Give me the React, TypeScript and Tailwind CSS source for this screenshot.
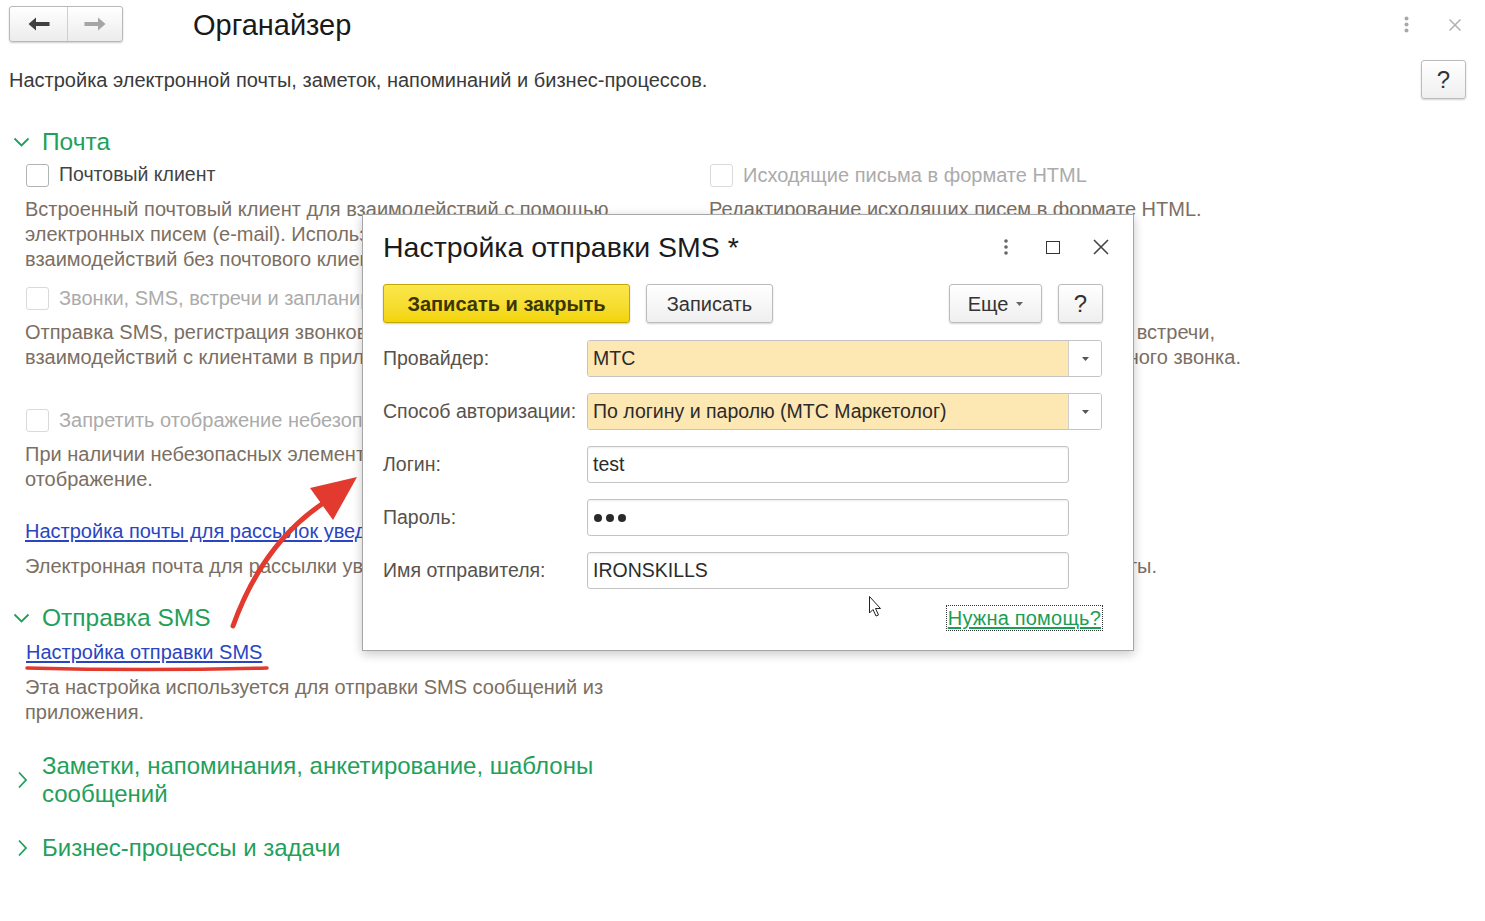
import React from "react";

function Checkbox({ disabled }: { disabled?: boolean }) {
  return (
    <span
      className={`inline-block h-[23px] w-[23px] shrink-0 rounded-[3px] border bg-white ${
        disabled ? "border-[#dadada]" : "border-[#b3b3b3]"
      }`}
    />
  );
}

function ChevronDown() {
  return (
    <svg width="17" height="10" viewBox="0 0 17 10" className="shrink-0">
      <path d="M1.5 1.5 L8.5 8.5 L15.5 1.5" fill="none" stroke="#1fa05b" strokeWidth="1.8" />
    </svg>
  );
}

function ChevronRight() {
  return (
    <svg width="17" height="18" viewBox="0 0 17 18" className="shrink-0">
      <path d="M5 1.5 L12 9 L5 16.5" fill="none" stroke="#1fa05b" strokeWidth="1.8" />
    </svg>
  );
}

function NavArrow({ dir, color }: { dir: "left" | "right"; color: string }) {
  return (
    <svg width="22" height="14" viewBox="0 0 22 14" className={dir === "right" ? "scale-x-[-1]" : ""}>
      <path d="M0.5 7 L8 0.5 V5 H21.5 V9 H8 V13.5 Z" fill={color} />
    </svg>
  );
}

function HelpButton() {
  return (
    <button className="flex h-[39px] w-[45px] items-center justify-center rounded-[3px] border border-[#bcbcbc] bg-gradient-to-b from-white to-[#efefef] text-[24px] text-[#333] shadow-[0_1px_2px_rgba(0,0,0,0.18)]">
      ?
    </button>
  );
}

function Field({
  label,
  value,
  select,
  password,
}: {
  label: string;
  value: string;
  select?: boolean;
  password?: boolean;
}) {
  return (
    <div className="flex h-[37px] items-center">
      <span className="w-[204px] shrink-0 text-[19.5px] text-[#57524c]">{label}</span>
      {select ? (
        <div className="flex h-full w-[515px] overflow-hidden rounded-[3px] border border-[#c4c4c4] shadow-[inset_0_1px_2px_rgba(0,0,0,0.08)]">
          <div className="flex flex-1 items-center bg-[#fde7b2] pl-[5px] text-[19.5px] text-[#2b2b2b]">{value}</div>
          <div className="flex w-[33px] items-center justify-center border-l border-[#d0d0d0] bg-white">
            <svg width="7" height="4" viewBox="0 0 7 4">
              <path d="M0 0 H7 L3.5 4 Z" fill="#555" />
            </svg>
          </div>
        </div>
      ) : (
        <div className="flex h-full w-[482px] items-center rounded-[3px] border border-[#c4c4c4] bg-white pl-[5px] text-[19.5px] text-[#2b2b2b] shadow-[inset_0_1px_2px_rgba(0,0,0,0.08)]">
          {password ? (
            <span className="flex items-center gap-[4px] pl-[1px]">
              <span className="h-[8px] w-[8px] rounded-full bg-[#2a2a2a]" />
              <span className="h-[8px] w-[8px] rounded-full bg-[#2a2a2a]" />
              <span className="h-[8px] w-[8px] rounded-full bg-[#2a2a2a]" />
            </span>
          ) : (
            value
          )}
        </div>
      )}
    </div>
  );
}

function SmsDialog() {
  return (
    <div className="absolute left-[362px] top-[214px] h-[437px] w-[772px] border border-[#a6a6a6] bg-white pl-[20px] pr-[30px] pt-[14px] shadow-[0_3px_10px_rgba(0,0,0,0.22)]">
      <div className="-mr-[6px] flex h-[36px] items-center">
        <h2 className="text-[28.5px] leading-[36px] text-[#1b1b1b]">Настройка отправки SMS *</h2>
        <div className="ml-auto flex items-center">
          <svg width="4" height="16" viewBox="0 0 4 16">
            <circle cx="2" cy="2" r="1.8" fill="#666" />
            <circle cx="2" cy="8" r="1.8" fill="#666" />
            <circle cx="2" cy="14" r="1.8" fill="#666" />
          </svg>
          <span className="ml-[38px] inline-block h-[13px] w-[14px] border-[1.6px] border-[#333]" />
          <svg width="16" height="16" viewBox="0 0 16 16" className="ml-[33px]">
            <path d="M1 1 L15 15 M15 1 L1 15" stroke="#444" strokeWidth="1.6" />
          </svg>
        </div>
      </div>

      <div className="mt-[19px] flex h-[39px] items-stretch">
        <button className="w-[247px] rounded-[3px] border border-[#c2a800] bg-gradient-to-b from-[#fbe74a] to-[#f2d500] text-[20px] font-bold text-[#3d3500] shadow-[0_1px_2px_rgba(0,0,0,0.2)]">
          Записать и закрыть
        </button>
        <button className="ml-[16px] w-[127px] rounded-[3px] border border-[#bcbcbc] bg-gradient-to-b from-white to-[#efefef] text-[20px] text-[#333] shadow-[0_1px_2px_rgba(0,0,0,0.18)]">
          Записать
        </button>
        <button className="ml-auto flex w-[93px] items-center justify-center gap-[8px] rounded-[3px] border border-[#bcbcbc] bg-gradient-to-b from-white to-[#efefef] text-[20px] text-[#333] shadow-[0_1px_2px_rgba(0,0,0,0.18)]">
          Еще
          <svg width="7" height="4" viewBox="0 0 7 4">
            <path d="M0 0 H7 L3.5 4 Z" fill="#666" />
          </svg>
        </button>
        <div className="ml-[16px]">
          <HelpButton />
        </div>
      </div>

      <div className="mt-[17px] flex flex-col gap-[16px]">
        <Field label="Провайдер:" value="МТС" select />
        <Field label="Способ авторизации:" value="По логину и паролю (МТС Маркетолог)" select />
        <Field label="Логин:" value="test" />
        <Field label="Пароль:" value="" password />
        <Field label="Имя отправителя:" value="IRONSKILLS" />
      </div>

      <div className="mt-[16px] flex justify-end">
        <a className="border border-dotted border-[#333] px-[1px] text-[20px] tracking-[0.2px] leading-[24px] text-[#1a9e55] underline decoration-[#1a9e55] underline-offset-[2px]">
          Нужна помощь?
        </a>
      </div>
    </div>
  );
}

export default function App() {
  const desc = "text-[20px] leading-[25px] text-[#7b6f63]";
  const heading = "flex items-center gap-[12px] pl-[13px] text-[24.5px] leading-[30px] text-[#1fa05b]";
  const link = "text-[20px] leading-[25px] text-[#2a45c2] underline underline-offset-[2px]";

  return (
    <div className="relative h-[921px] w-[1485px] overflow-hidden bg-white font-['Liberation_Sans',Arial,sans-serif] text-[#333]">
      {/* header */}
      <header className="flex items-start pl-[9px] pr-[24px] pt-[6px]">
        <div className="flex h-[36px] w-[114px] overflow-hidden rounded-[3px] border border-[#b8b8b8] bg-gradient-to-b from-white to-[#ececec] shadow-[0_1px_2px_rgba(0,0,0,0.2)]">
          <div className="flex w-[58px] items-center justify-center border-r border-[#cfcfcf]">
            <NavArrow dir="left" color="#404040" />
          </div>
          <div className="flex flex-1 items-center justify-center">
            <NavArrow dir="right" color="#a5a5a5" />
          </div>
        </div>
        <h1 className="ml-[70px] text-[29px] leading-[38px] text-[#1a1a1a]">Органайзер</h1>
        <div className="ml-auto flex items-center pt-[10px]">
          <svg width="5" height="17" viewBox="0 0 5 17">
            <circle cx="2.5" cy="2.5" r="2" fill="#a8a8a8" />
            <circle cx="2.5" cy="8.5" r="2" fill="#a8a8a8" />
            <circle cx="2.5" cy="14.5" r="2" fill="#a8a8a8" />
          </svg>
          <svg width="12" height="12" viewBox="0 0 12 12" className="ml-[40px]">
            <path d="M0.5 0.5 L11.5 11.5 M11.5 0.5 L0.5 11.5" stroke="#b0b0b0" strokeWidth="1.5" />
          </svg>
        </div>
      </header>

      <div className="mt-[16px] flex items-center justify-between pl-[9px] pr-[19px]">
        <p className="text-[20px] text-[#3a3a3a]">
          Настройка электронной почты, заметок, напоминаний и бизнес-процессов.
        </p>
        <HelpButton />
      </div>

      {/* Почта */}
      <div className={`mt-[28px] ${heading}`}>
        <ChevronDown />
        <span>Почта</span>
      </div>

      <div className="grid grid-cols-[684px_1fr] pl-[25px]">
        {/* row 1 */}
        <div className="mt-[6px]">
          <label className="flex h-[24px] items-center gap-[10px] pl-[1px] text-[19.5px] text-[#444]">
            <Checkbox />
            Почтовый клиент
          </label>
          <p className={`mt-[10px] whitespace-nowrap ${desc}`}>
            Встроенный почтовый клиент для взаимодействий с помощью
            <br />
            электронных писем (e-mail). Использование
            <br />
            взаимодействий без почтового клиента.
          </p>
        </div>
        <div className="mt-[6px]">
          <label className="flex h-[24px] items-center gap-[10px] pl-[1px] text-[20px] text-[#ababab]">
            <Checkbox disabled />
            Исходящие письма в формате HTML
          </label>
          <p className={`mt-[10px] ${desc}`}>Редактирование исходящих писем в формате HTML.</p>
        </div>

        {/* row 2 */}
        <div className="mt-[14px]">
          <label className="flex h-[24px] items-center gap-[10px] pl-[1px] text-[20px] text-[#ababab]">
            <Checkbox disabled />
            Звонки, SMS, встречи и запланированные взаимодействия
          </label>
          <p className={`mt-[10px] whitespace-nowrap ${desc}`}>
            Отправка SMS, регистрация звонков и встреч,
            <br />
            взаимодействий с клиентами в приложении.
          </p>
        </div>
        <div className="mt-[14px]">
          <label className="flex h-[24px] items-center gap-[10px] pl-[1px] text-[20px] text-[#ababab]">
            <Checkbox disabled />
            Телефония
          </label>
          <p className={`mt-[10px] whitespace-nowrap ${desc}`}>
            <span className="block w-[506px] text-right">Звонки, SMS и встречи,</span>
            <span className="block w-[532px] text-right">при поступлении телефонного звонка.</span>
          </p>
        </div>

        {/* row 3 */}
        <div className="col-span-2 mt-[38px]">
          <label className="flex h-[24px] items-center gap-[10px] pl-[1px] text-[20px] text-[#ababab]">
            <Checkbox disabled />
            Запретить отображение небезопасного содержимого в письмах
          </label>
          <p className={`mt-[10px] whitespace-nowrap ${desc}`}>
            При наличии небезопасных элементов в письме блокировать его
            <br />
            отображение.
          </p>
        </div>

        {/* row 4 */}
        <div className="mt-[27px]">
          <a className={`block whitespace-nowrap ${link}`}>Настройка почты для рассылок уведомлений клиентам</a>
          <p className={`mt-[10px] whitespace-nowrap ${desc}`}>Электронная почта для рассылки уведомлений.</p>
        </div>
        <div className="mt-[27px]">
          <a className={`block whitespace-nowrap ${link}`}>Учетная запись</a>
          <p className={`mt-[10px] whitespace-nowrap ${desc}`}>
            <span className="block w-[448px] text-right">Для почты.</span>
          </p>
        </div>
      </div>

      {/* Отправка SMS */}
      <div className={`mt-[24px] ${heading}`}>
        <ChevronDown />
        <span>Отправка SMS</span>
      </div>
      <div className="pl-[26px]">
        <a className={`mt-[7px] inline-block ${link}`}>Настройка отправки SMS</a>
        <p className={`mt-[9px] -ml-[1px] ${desc}`}>
          Эта настройка используется для отправки SMS сообщений из
          <br />
          приложения.
        </p>
      </div>

      <div className="mt-[27px] flex items-center gap-[11px] pl-[14px] text-[24px] leading-[28px] text-[#1fa05b]">
        <ChevronRight />
        <span>
          Заметки, напоминания, анкетирование, шаблоны
          <br />
          сообщений
        </span>
      </div>

      <div className="mt-[25px] flex items-center gap-[11px] pl-[14px] text-[24px] leading-[30px] text-[#1fa05b]">
        <ChevronRight />
        <span>Бизнес-процессы и задачи</span>
      </div>

      <SmsDialog />

      {/* annotations */}
      <svg className="pointer-events-none absolute left-0 top-0" width="1485" height="921" viewBox="0 0 1485 921">
        <path d="M233 626 Q 262 545 322 504" fill="none" stroke="#e23a2e" strokeWidth="5" strokeLinecap="round" />
        <polygon points="357,477 310,488 333,520" fill="#e23a2e" />
        <path d="M27 668 Q 146 671 267 668" fill="none" stroke="#e23a2e" strokeWidth="3.5" strokeLinecap="round" />
        <path
          d="M869.5 596.5 L869.5 613 L873 609.5 L876 616 L878.5 615 L875.5 608.5 L880.5 608.5 Z"
          fill="#fff"
          stroke="#222"
          strokeWidth="1"
        />
      </svg>
    </div>
  );
}
